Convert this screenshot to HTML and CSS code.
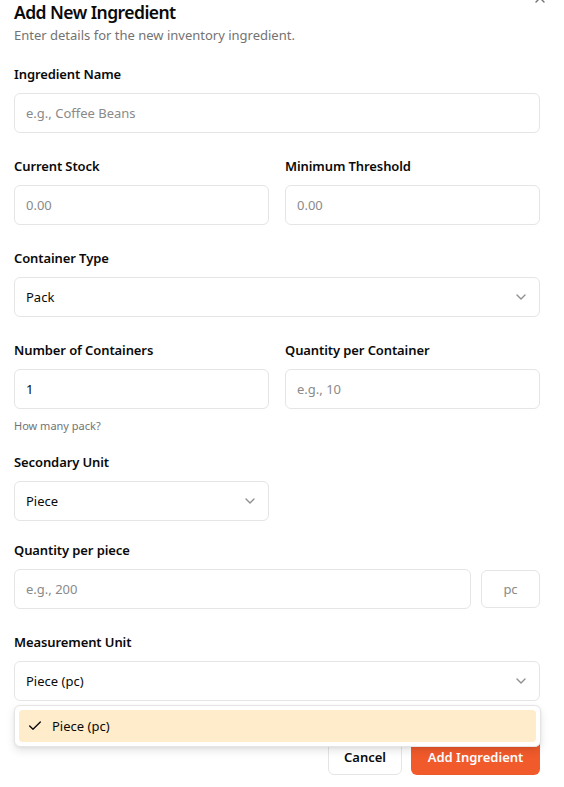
FILE: index.html
```html
<!DOCTYPE html>
<html lang="en">
<head>
<meta charset="utf-8">
<link rel="stylesheet" href="styles.css">
<title>Add New Ingredient</title>
</head>
<body>
<div class="dialog">
  <button class="close" aria-label="Close">
    <svg width="16" height="16" viewBox="0 0 24 24" fill="none" stroke="currentColor" stroke-width="2" stroke-linecap="round" stroke-linejoin="round"><path d="M18 6 6 18"/><path d="m6 6 12 12"/></svg>
  </button>
  <div class="header">
    <h2 class="title">Add New Ingredient</h2>
    <p class="desc">Enter details for the new inventory ingredient.</p>
  </div>

  <div class="form">
    <div class="field row-gap">
      <label class="label">Ingredient Name</label>
      <div class="input placeholder">e.g., Coffee Beans</div>
    </div>

    <div class="grid2 row-gap">
      <div class="field">
        <label class="label">Current Stock</label>
        <div class="input placeholder">0.00</div>
      </div>
      <div class="field">
        <label class="label">Minimum Threshold</label>
        <div class="input placeholder">0.00</div>
      </div>
    </div>

    <div class="field row-gap">
      <label class="label">Container Type</label>
      <div class="input select"><span>Pack</span><svg class="chev" width="16" height="16" viewBox="0 0 24 24" fill="none" stroke="currentColor" stroke-width="2" stroke-linecap="round" stroke-linejoin="round"><path d="m6 9 6 6 6-6"/></svg></div>
    </div>

    <div class="grid2 row-gap-sm">
      <div class="field">
        <label class="label">Number of Containers</label>
        <div class="input">1</div>
        <p class="help">How many pack?</p>
      </div>
      <div class="field">
        <label class="label">Quantity per Container</label>
        <div class="input placeholder">e.g., 10</div>
      </div>
    </div>

    <div class="grid2 row-gap-md">
      <div class="field">
        <label class="label">Secondary Unit</label>
        <div class="input select"><span>Piece</span><svg class="chev" width="16" height="16" viewBox="0 0 24 24" fill="none" stroke="currentColor" stroke-width="2" stroke-linecap="round" stroke-linejoin="round"><path d="m6 9 6 6 6-6"/></svg></div>
      </div>
    </div>

    <div class="field row-gap">
      <label class="label">Quantity per piece</label>
      <div class="with-unit">
        <div class="input placeholder grow">e.g., 200</div>
        <div class="unit">pc</div>
      </div>
    </div>

    <div class="field measure">
      <label class="label">Measurement Unit</label>
      <div class="input select"><span>Piece (pc)</span><svg class="chev" width="16" height="16" viewBox="0 0 24 24" fill="none" stroke="currentColor" stroke-width="2" stroke-linecap="round" stroke-linejoin="round"><path d="m6 9 6 6 6-6"/></svg></div>
      <div class="popover">
        <div class="option">
          <svg class="check" width="16" height="16" viewBox="0 0 24 24" fill="none" stroke="currentColor" stroke-width="2" stroke-linecap="round" stroke-linejoin="round"><path d="M20 6 9 17l-5-5"/></svg>
          <span>Piece (pc)</span>
        </div>
      </div>
    </div>
  </div>

  <div class="footer">
    <button class="btn btn-outline">Cancel</button>
    <button class="btn btn-primary">Add Ingredient</button>
  </div>
</div>
</body>
</html>
```

FILE: styles.css
```css
* { box-sizing: border-box; }
html, body {
  margin: 0;
  padding: 0;
  background: #ffffff;
}
body {
  font-family: "Noto Sans", "Open Sans", "Liberation Sans", sans-serif;
  color: #0a0a0a;
  width: 564px;
  height: 787px;
  overflow: hidden;
}
.dialog {
  position: relative;
  padding: 0 24px 0 14px;
}
.close {
  position: absolute;
  right: 16px;
  top: -10px;
  width: 16px;
  height: 16px;
  padding: 0;
  border: 0;
  background: transparent;
  color: #333;
  opacity: 0.7;
}
.close svg { display: block; }
.header {
  display: flex;
  flex-direction: column;
  gap: 1px;
}
.title {
  margin: 0;
  font-size: 17.5px;
  line-height: 24px;
  font-weight: 600;
  letter-spacing: -0.55px;
}
.desc {
  margin: 0;
  font-size: 13px;
  line-height: 20px;
  color: #737373;
}
.form {
  margin-top: 19px;
  display: flex;
  flex-direction: column;
}
.row-gap { margin-bottom: 23px; }
.row-gap-sm { margin-bottom: 18px; }
.row-gap-md { margin-bottom: 19px; }
.grid2 {
  display: grid;
  grid-template-columns: 1fr 1fr;
  column-gap: 16px;
}
.field {
  display: flex;
  flex-direction: column;
}
.label {
  font-size: 13px;
  line-height: 20px;
  font-weight: 600;
  margin-bottom: 9px;
  letter-spacing: -0.1px;
}
.input {
  height: 40px;
  border: 1px solid #e5e5e5;
  border-radius: 6px;
  padding: 0 11px;
  display: flex;
  align-items: center;
  font-size: 13px;
  color: #0a0a0a;
  background: #fff;
}
.placeholder { color: #8a8a8a; }
.select { justify-content: space-between; }
.chev {
  color: #737373;
  opacity: 0.8;
  margin-right: -1px;
}
.help {
  margin: 9px 0 0;
  font-size: 11px;
  line-height: 16px;
  color: #737373;
}
.with-unit {
  display: flex;
  align-items: center;
  gap: 10px;
}
.grow { flex: 1; }
.unit {
  width: 59px;
  height: 38px;
  border: 1px solid #e5e5e5;
  border-radius: 6px;
  display: flex;
  align-items: center;
  justify-content: center;
  font-size: 13px;
  color: #8a8a8a;
}
.measure { position: relative; }
.popover {
  position: absolute;
  left: 0;
  right: -1px;
  top: calc(100% + 4px);
  padding: 4px;
  border: 1px solid #e5e5e5;
  border-radius: 6px;
  background: #fff;
  box-shadow: 0 4px 8px rgba(0, 0, 0, 0.10), 0 1px 3px rgba(0, 0, 0, 0.06);
  z-index: 5;
}
.option {
  height: 32px;
  border-radius: 4px;
  background: #feecca;
  display: flex;
  align-items: center;
  gap: 9px;
  padding-left: 8px;
  font-size: 13px;
  color: #0a0a0a;
}
.check { color: #0a0a0a; flex: none; }
.footer {
  margin-top: 38px;
  display: flex;
  justify-content: flex-end;
  gap: 9px;
}
.btn {
  height: 36px;
  border-radius: 6px;
  font-family: inherit;
  font-size: 13px;
  font-weight: 600;
  padding: 0;
  display: flex;
  align-items: center;
  justify-content: center;
}
.btn-outline {
  width: 74px;
  background: #fff;
  color: #0a0a0a;
  border: 1px solid #e5e5e5;
}
.btn-primary {
  width: 129px;
  background: #f15a2b;
  color: #fff;
  border: 0;
}
```
